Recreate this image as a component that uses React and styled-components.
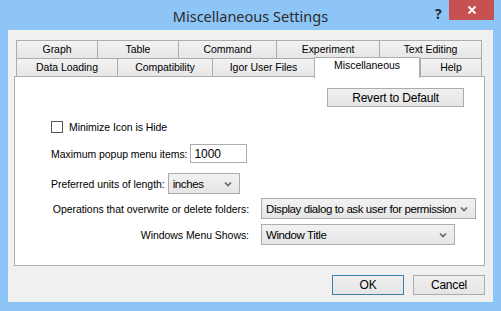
import React from "react";
import styled, { createGlobalStyle } from "styled-components";

const GlobalStyle = createGlobalStyle`
    html, body {
        margin: 0;
        padding: 0;
        background: #8dc6f6;
    }
    * {
        box-sizing: border-box;
    }
`;

const Window = styled.div`
    width: 501px;
    height: 311px;
    display: flex;
    flex-direction: column;
    background: #8dc6f6;
    font-family: "Liberation Sans", Arial, sans-serif;
    font-size: 10.5px;
    letter-spacing: -0.05px;
    color: #000;
    white-space: nowrap;
    overflow: hidden;
`;

const TitleBar = styled.div`
    height: 30px;
    display: flex;
    align-items: flex-start;
    letter-spacing: 0;
`;

const TitleSpacer = styled.div`
    width: 66px;
`;

const Title = styled.div`
    flex: 1;
    text-align: center;
    padding-top: 6px;
    font-family: "Noto Sans", "Open Sans", sans-serif;
    font-size: 14.5px;
    color: #2b2b2b;
`;

const HelpGlyph = styled.div`
    width: 14px;
    padding-top: 4px;
    font-family: "Noto Sans", sans-serif;
    font-weight: bold;
    font-size: 14px;
    color: #2a2a2a;
`;

const CloseButton = styled.div`
    width: 45px;
    height: 20px;
    margin-right: 7px;
    background: #c75050;
    display: flex;
    align-items: center;
    justify-content: center;
`;

const Client = styled.div`
    flex: 1;
    margin: 0 8px 9px 8px;
    background: #f0f0f0;
    display: flex;
    flex-direction: column;
    padding: 10px 8px 0 6px;
`;

const TabStrip = styled.div`
    margin-left: 2px;
    display: flex;
    flex-direction: column;
    position: relative;
    z-index: 1;
`;

const TabRow = styled.div`
    display: flex;
    align-items: flex-end;
    height: 18px;
`;

const Tab = styled.div`
    width: ${(p) => p.w}px;
    height: 18px;
    border: 1px solid #acacac;
    border-right: ${(p) => (p.last ? "1px solid #acacac" : "none")};
    border-bottom: none;
    background: linear-gradient(#f3f3f3, #e6e6e6);
    text-align: center;
    line-height: 16px;
`;

const ActiveTab = styled.div`
    width: ${(p) => p.w}px;
    height: 21px;
    margin-bottom: -2px;
    border: 1px solid #acacac;
    border-bottom: none;
    background: #fff;
    text-align: center;
    line-height: 14px;
`;

const Panel = styled.div`
    height: 190px;
    background: #fff;
    border: 1px solid #adadad;
    display: flex;
    flex-direction: column;
    padding: 11px 20px 0 36px;
`;

const Button = styled.button`
    width: ${(p) => p.w}px;
    height: ${(p) => p.h || 20}px;
    border: 1px solid ${(p) => (p.primary ? "#3c7fb1" : "#acacac")};
    background: linear-gradient(#f0f0f0, #e5e5e5);
    font-family: "Liberation Sans", Arial, sans-serif;
    font-size: ${(p) => p.fs || 11}px;
    letter-spacing: -0.2px;
    color: #000;
    padding: 0;
`;

const TopRow = styled.div`
    display: flex;
    justify-content: flex-end;
`;

const Row = styled.div`
    display: flex;
    align-items: center;
    gap: ${(p) => p.gap || 3}px;
    margin-top: ${(p) => p.mt}px;
`;

const Checkbox = styled.div`
    width: 12px;
    height: 12px;
    border: 1px solid #555;
    background: #fff;
    margin-right: 3px;
`;

const TextBox = styled.div`
    width: 57px;
    height: 19px;
    border: 1px solid #abadb3;
    background: #fff;
    padding: 2px 0 0 3px;
    font-size: 12px;
`;

const Select = styled.div`
    width: ${(p) => p.w}px;
    height: 21px;
    border: 1px solid #acacac;
    background: linear-gradient(#f2f2f2, #e5e5e5);
    display: flex;
    align-items: center;
    justify-content: space-between;
    padding: 0 7px 0 4px;
    font-size: 11.5px;
    letter-spacing: -0.4px;
`;

const FormGrid = styled.div`
    display: grid;
    grid-template-columns: 198px auto;
    column-gap: 12px;
    row-gap: 5px;
    align-items: center;
    margin-top: 4px;
`;

const RightLabel = styled.div`
    text-align: right;
`;

const Footer = styled.div`
    display: flex;
    justify-content: flex-end;
    gap: 9px;
    margin-top: 9px;
`;

const Chevron = () => (
    <svg width="8" height="6" viewBox="0 0 8 6">
        <path d="M1 1.5 L4 4.5 L7 1.5" fill="none" stroke="#666" strokeWidth="1.6" />
    </svg>
);

const CloseX = () => (
    <svg width="10" height="10" viewBox="0 0 10 10">
        <path d="M1.5 1.5 L8.5 8.5 M8.5 1.5 L1.5 8.5" stroke="#fff" strokeWidth="2" />
    </svg>
);

const topTabs = [
    { name: "Graph", w: 81 },
    { name: "Table", w: 81 },
    { name: "Command", w: 98 },
    { name: "Experiment", w: 103 },
    { name: "Text Editing", w: 103 },
];

const bottomTabs = [
    { name: "Data Loading", w: 101 },
    { name: "Compatibility", w: 95 },
    { name: "Igor User Files", w: 102 },
    { name: "Miscellaneous", w: 106, active: true },
    { name: "Help", w: 62 },
];

const App = () => (
    <>
        <GlobalStyle />
        <Window>
            <TitleBar>
                <TitleSpacer />
                <Title>Miscellaneous Settings</Title>
                <HelpGlyph>?</HelpGlyph>
                <CloseButton>
                    <CloseX />
                </CloseButton>
            </TitleBar>
            <Client>
                <TabStrip>
                    <TabRow>
                        {topTabs.map((t, i) => (
                            <Tab key={t.name} w={t.w} last={i === topTabs.length - 1}>
                                {t.name}
                            </Tab>
                        ))}
                    </TabRow>
                    <TabRow>
                        {bottomTabs.map((t, i) =>
                            t.active ? (
                                <ActiveTab key={t.name} w={t.w}>
                                    {t.name}
                                </ActiveTab>
                            ) : (
                                <Tab key={t.name} w={t.w} last={i === bottomTabs.length - 1}>
                                    {t.name}
                                </Tab>
                            )
                        )}
                    </TabRow>
                </TabStrip>
                <Panel>
                    <TopRow>
                        <Button w={137} h={19} fs={12}>Revert to Default</Button>
                    </TopRow>
                    <Row mt={14}>
                        <Checkbox />
                        <span>Minimize Icon is Hide</span>
                    </Row>
                    <Row mt={11}>
                        <span>Maximum popup menu items:</span>
                        <TextBox>1000</TextBox>
                    </Row>
                    <Row mt={10}>
                        <span>Preferred units of length:</span>
                        <Select w={72}>
                            <span>inches</span>
                            <Chevron />
                        </Select>
                    </Row>
                    <FormGrid>
                        <RightLabel>Operations that overwrite or delete folders:</RightLabel>
                        <Select w={215}>
                            <span>Display dialog to ask user for permission</span>
                            <Chevron />
                        </Select>
                        <RightLabel>Windows Menu Shows:</RightLabel>
                        <Select w={194}>
                            <span>Window Title</span>
                            <Chevron />
                        </Select>
                    </FormGrid>
                </Panel>
                <Footer>
                    <Button w={72} primary fs={12}>OK</Button>
                    <Button w={72} fs={12}>Cancel</Button>
                </Footer>
            </Client>
        </Window>
    </>
);

export default App;
